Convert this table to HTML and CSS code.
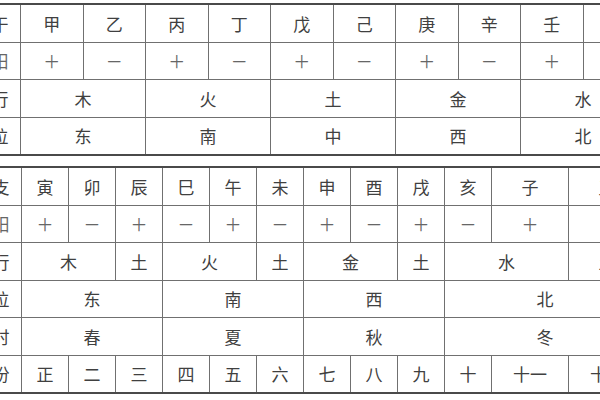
FILE: index.html
```html
<!DOCTYPE html>
<html lang="zh">
<head>
<meta charset="utf-8">
<link rel="stylesheet" href="styles.css">
</head>
<body>
<div class="page">
  <table class="grid stems">
    <colgroup>
      <col class="c-label">
      <col class="c-stem"><col class="c-stem"><col class="c-stem"><col class="c-stem"><col class="c-stem">
      <col class="c-stem"><col class="c-stem"><col class="c-stem"><col class="c-stem"><col class="c-stem">
    </colgroup>
    <tr><td class="label">天干</td><td>甲</td><td>乙</td><td>丙</td><td>丁</td><td>戊</td><td>己</td><td>庚</td><td>辛</td><td>壬</td><td>癸</td></tr>
    <tr class="sign"><td class="label">阴阳</td><td>＋</td><td>－</td><td>＋</td><td>－</td><td>＋</td><td>－</td><td>＋</td><td>－</td><td>＋</td><td>－</td></tr>
    <tr><td class="label">五行</td><td colspan="2">木</td><td colspan="2">火</td><td colspan="2">土</td><td colspan="2">金</td><td colspan="2">水</td></tr>
    <tr><td class="label">方位</td><td colspan="2">东</td><td colspan="2">南</td><td colspan="2">中</td><td colspan="2">西</td><td colspan="2">北</td></tr>
  </table>

  <table class="grid branches">
    <colgroup>
      <col class="c-label">
      <col class="c-br"><col class="c-br"><col class="c-br"><col class="c-br"><col class="c-br">
      <col class="c-br"><col class="c-br"><col class="c-br"><col class="c-br"><col class="c-br">
      <col class="c-wide"><col class="c-wide">
    </colgroup>
    <tr><td class="label">地支</td><td>寅</td><td>卯</td><td>辰</td><td>巳</td><td>午</td><td>未</td><td>申</td><td>酉</td><td>戌</td><td>亥</td><td>子</td><td>丑</td></tr>
    <tr class="sign"><td class="label">阴阳</td><td>＋</td><td>－</td><td>＋</td><td>－</td><td>＋</td><td>－</td><td>＋</td><td>－</td><td>＋</td><td>－</td><td>＋</td><td>－</td></tr>
    <tr><td class="label">五行</td><td colspan="2">木</td><td>土</td><td colspan="2">火</td><td>土</td><td colspan="2">金</td><td>土</td><td colspan="2">水</td><td>土</td></tr>
    <tr><td class="label">方位</td><td colspan="3">东</td><td colspan="3">南</td><td colspan="3">西</td><td colspan="3">北</td></tr>
    <tr><td class="label">四时</td><td colspan="3">春</td><td colspan="3">夏</td><td colspan="3">秋</td><td colspan="3">冬</td></tr>
    <tr><td class="label">月份</td><td>正</td><td>二</td><td>三</td><td>四</td><td>五</td><td>六</td><td>七</td><td>八</td><td>九</td><td>十</td><td>十一</td><td>十二</td></tr>
  </table>
</div>
</body>
</html>
```

FILE: styles.css
```css
html, body {
  margin: 0;
  padding: 0;
  background: #fff;
}

body {
  width: 600px;
  height: 400px;
  overflow: hidden;
  font-family: "Noto Sans CJK SC", "Noto Sans", sans-serif;
  color: #404040;
}

.page {
  padding-top: 3px;
}

.grid {
  border-collapse: collapse;
  table-layout: fixed;
  border-top: 2px solid #4a4a4a;
  border-bottom: 2px solid #4a4a4a;
}

.grid td {
  border: 1px solid #707070;
  padding: 0;
  height: 36.5px;
  text-align: center;
  vertical-align: middle;
  font-size: 17px;
  font-weight: 400;
  line-height: 1;
  white-space: nowrap;
}

.grid .sign td {
  color: #666;
}

.c-label { width: 58px; }
.c-stem { width: 62.5px; }
.c-br { width: 47px; }
.c-wide { width: 77px; }

.stems {
  width: 683px;
  margin-left: -38px;
}

.branches {
  width: 682px;
  margin-left: -37px;
  margin-top: 10px;
}
```
